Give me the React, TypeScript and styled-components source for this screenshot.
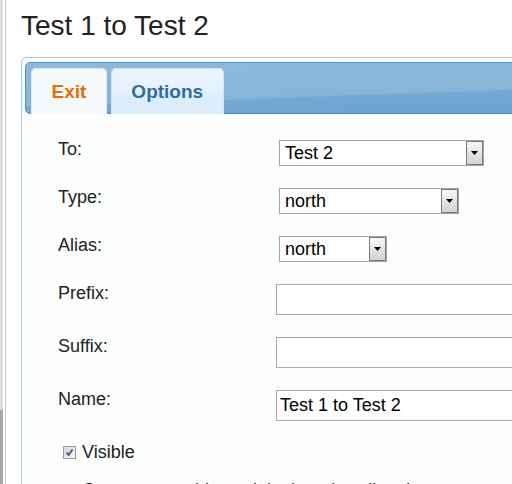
import React from "react";
import styled, { createGlobalStyle, css } from "styled-components";

const GlobalStyle = createGlobalStyle`
  html, body {
    margin: 0;
    padding: 0;
    background: #ffffff;
    overflow: hidden;
  }
  body {
    font-family: "Liberation Sans", Arial, sans-serif;
    color: #222222;
  }
  * { box-sizing: border-box; }
`;

const Page = styled.div`
  display: flex;
  width: 512px;
  height: 484px;
  overflow: hidden;
`;

const Rail = styled.div`
  display: flex;
  width: 6px;
  flex: none;
`;

const Track = styled.div`
  display: flex;
  flex-direction: column;
  width: 3px;
  margin-right: 2px;
`;

const TrackUpper = styled.div`
  flex: 1;
  background: #dcdcdc;
`;

const TrackThumb = styled.div`
  height: 74px;
  background: #a9a9a9;
`;

const RailLine = styled.div`
  width: 1px;
  background: #c9c9c9;
`;

const Main = styled.div`
  flex: 1;
  padding-left: 15px;
  min-width: 0;
`;

const Title = styled.h1`
  margin: 0;
  padding-top: 10px;
  font-size: 28px;
  line-height: 32px;
  font-weight: normal;
  color: #222222;
  white-space: nowrap;
`;

const Panel = styled.div`
  margin-top: 15px;
  width: 560px;
  height: 440px;
  border: 1px solid #a6c9e2;
  border-radius: 5px;
  background: #fcfdfd;
  padding: 4px 3px 0 3px;
`;

const TabBar = styled.div`
  display: flex;
  align-items: flex-end;
  gap: 4px;
  padding: 5px 5px 0 5px;
  border: 1px solid #4297d7;
  border-radius: 5px;
  background: linear-gradient(
    178deg,
    #8dbadb 0%,
    #87b4d8 62%,
    #74a9d2 64%,
    #6aa1cf 100%
  );
`;

const Tab = styled.div<{ $active?: boolean }>`
  height: 46px;
  margin-bottom: -1px;
  padding: 0 19.5px;
  border: 1px solid #c5dbec;
  border-bottom: 0;
  border-radius: 5px 5px 0 0;
  font-size: 19px;
  font-weight: bold;
  line-height: 45px;
  white-space: nowrap;
  ${(p) =>
    p.$active
      ? css`
          background: #f6f9fb;
          border-color: #dbe8f3;
          color: #e17009;
        `
      : css`
          background: linear-gradient(#eaf4fd 0%, #e6f1fc 55%, #dceefc 57%, #dbecfb 100%);
          border-color: #d4e6f5;
          color: #2e6e9e;
        `}
`;

const Content = styled.div`
  padding: 26px 0 0 33px;
`;

const Row = styled.div`
  display: flex;
  align-items: flex-start;
  margin-bottom: 22px;
`;

const Label = styled.div`
  width: 218px;
  flex: none;
  font-size: 18px;
  line-height: 18px;
  color: #222222;
`;

const SelectBox = styled.div<{ $width: number }>`
  display: flex;
  width: ${(p) => p.$width}px;
  height: 26px;
  margin-left: 3px;
  border: 1px solid #a3a3a3;
  background: #ffffff;
`;

const SelectValue = styled.div`
  flex: 1;
  padding-left: 5px;
  font-size: 18px;
  line-height: 24px;
  color: #000000;
  white-space: nowrap;
  overflow: hidden;
`;

const DropButton = styled.div`
  display: flex;
  align-items: center;
  justify-content: center;
  width: 17px;
  height: 24px;
  border: 1px solid #7b7b7b;
  background: linear-gradient(#f7f7f7, #d3d3d3);
`;

const TextField = styled.input`
  width: 300px;
  height: 31px;
  padding: 0 3px;
  border: 1px solid #a9a9a9;
  background: #ffffff;
  font-family: "Liberation Sans", Arial, sans-serif;
  font-size: 18px;
  line-height: 29px;
  color: #000000;
  outline: none;
  border-radius: 0;
  margin: 0;
`;

const CheckRow = styled.label`
  display: flex;
  align-items: flex-start;
  gap: 6px;
  margin-left: 5px;
  margin-bottom: 20px;
  font-size: 18px;
  line-height: 18px;
  color: #222222;
`;

const CheckBox = styled.span`
  display: flex;
  align-items: center;
  justify-content: center;
  width: 13px;
  height: 13px;
  margin-top: 3px;
  border: 1px solid #9c9c9c;
  background: linear-gradient(135deg, #d9d9d9, #f6f6f6);
`;

const Note = styled.div`
  margin-left: 24px;
  font-size: 18px;
  line-height: 18px;
  color: #222222;
  white-space: nowrap;
`;

const Arrow = () => (
  <svg width="7" height="4" viewBox="0 0 7 4">
    <polygon points="0,0 7,0 3.5,4" fill="#000" />
  </svg>
);

const Check = () => (
  <svg width="9" height="9" viewBox="0 0 9 9">
    <path d="M1.5 4.5 L3.5 7 L7.5 1.5" stroke="#3d4f94" strokeWidth="1.8" fill="none" />
  </svg>
);

const Select = ({ value, width }: { value: string; width: number }) => (
  <SelectBox $width={width}>
    <SelectValue>{value}</SelectValue>
    <DropButton>
      <Arrow />
    </DropButton>
  </SelectBox>
);

export default function App() {
  return (
    <>
      <GlobalStyle />
      <Page>
        <Rail>
          <Track>
            <TrackUpper />
            <TrackThumb />
          </Track>
          <RailLine />
        </Rail>
        <Main>
          <Title>Test 1 to Test 2</Title>
          <Panel>
            <TabBar>
              <Tab $active>Exit</Tab>
              <Tab>Options</Tab>
            </TabBar>
            <Content>
              <Row>
                <Label>To:</Label>
                <Select value="Test 2" width={205} />
              </Row>
              <Row>
                <Label>Type:</Label>
                <Select value="north" width={180} />
              </Row>
              <Row>
                <Label>Alias:</Label>
                <Select value="north" width={108} />
              </Row>
              <Row>
                <Label>Prefix:</Label>
                <TextField readOnly value="" />
              </Row>
              <Row>
                <Label>Suffix:</Label>
                <TextField readOnly value="" />
              </Row>
              <Row>
                <Label>Name:</Label>
                <TextField readOnly value="Test 1 to Test 2" />
              </Row>
              <CheckRow>
                <CheckBox>
                  <Check />
                </CheckBox>
                Visible
              </CheckRow>
              <Note>Create a matching exit in the other direction</Note>
            </Content>
          </Panel>
        </Main>
      </Page>
    </>
  );
}
